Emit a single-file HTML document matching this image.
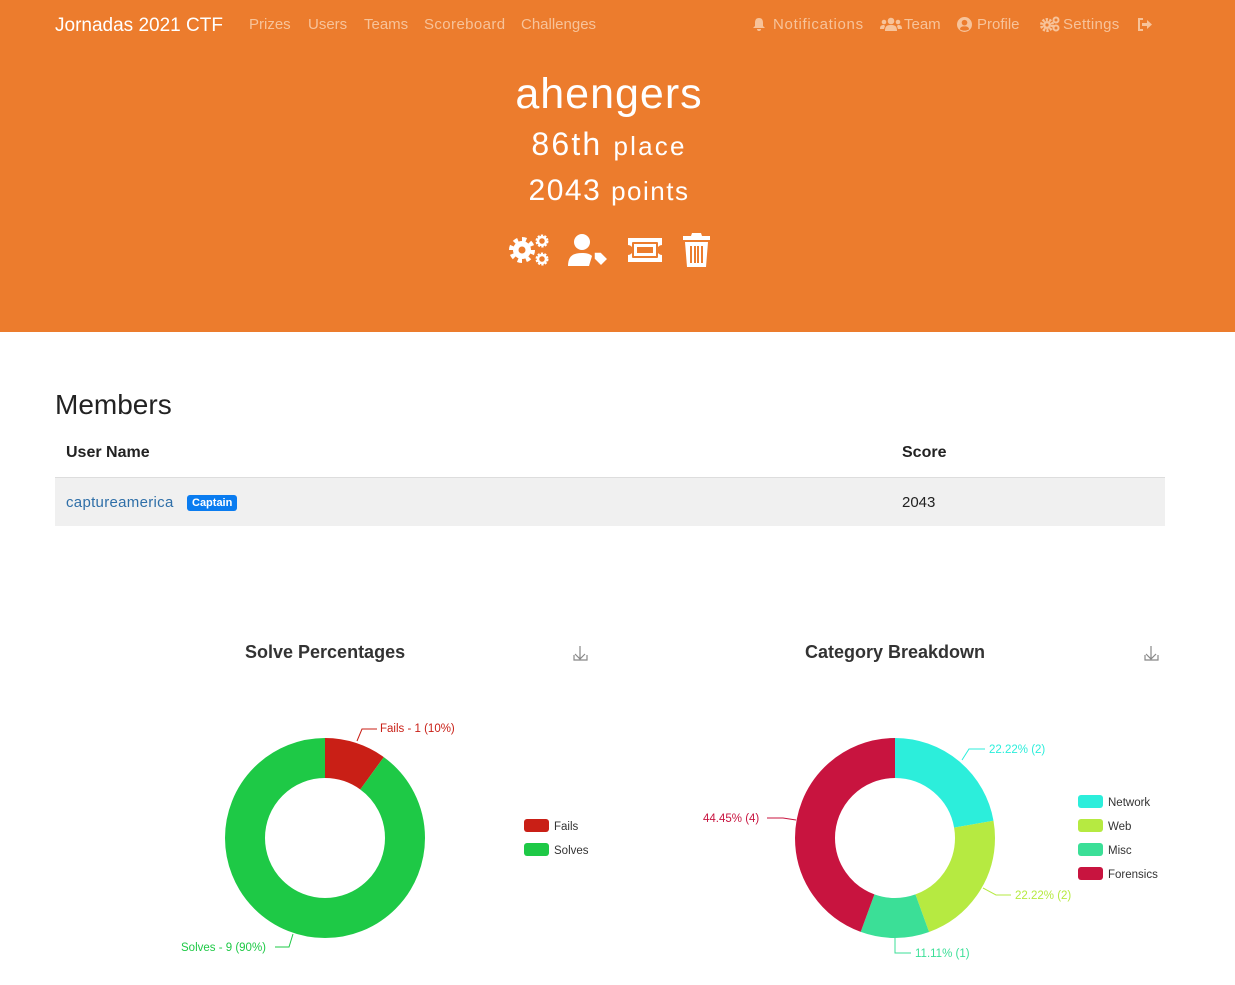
<!DOCTYPE html>
<html><head><meta charset="utf-8"><style>
*{margin:0;padding:0;box-sizing:border-box}
body{width:1235px;height:985px;background:#fff;font-family:"Liberation Sans",sans-serif;position:relative;overflow:hidden}
.hdr{position:absolute;left:0;top:0;width:1235px;height:332px;background:#ec7c2d}
.a{position:absolute;white-space:nowrap}
.nav{color:#f7c39a;font-size:15px;top:16px}
.ctr{left:0;width:1218px;text-align:center;color:#fff}
</style></head><body>
<div class="hdr">
<div class="a" style="left:55px;top:15px;color:#fff;font-size:19px">Jornadas 2021 CTF</div>
<div class="a nav" style="left:249px">Prizes</div>
<div class="a nav" style="left:308px">Users</div>
<div class="a nav" style="left:364px">Teams</div>
<div class="a nav" style="left:424px;letter-spacing:0.4px">Scoreboard</div>
<div class="a nav" style="left:521px">Challenges</div>
<svg class="a" style="left:752px;top:17px" width="14" height="15" viewBox="0 0 14 15"><path d="M7 1c-3 0-4 2-4 5v3l-2 2h12l-2-2V6c0-3-1-5-4-5zM5 12a2 2 0 0 0 4 0z" fill="#f7c39a"/></svg>
<div class="a nav" style="left:773px;letter-spacing:0.7px">Notifications</div>
<svg class="a" style="left:880px;top:17px" width="22" height="14" viewBox="0 0 22 14"><circle cx="11" cy="4" r="3.3" fill="#f7c39a"/><circle cx="4" cy="5" r="2.3" fill="#f7c39a"/><circle cx="18" cy="5" r="2.3" fill="#f7c39a"/><path d="M5 14c0-5 2-6 6-6s6 1 6 6zM0 12c0-3 1-4 4-4l1 1-1 3zM22 12c0-3-1-4-4-4l-1 1 1 3z" fill="#f7c39a"/></svg>
<div class="a nav" style="left:904px">Team</div>
<svg class="a" style="left:957px;top:17px" width="15" height="15" viewBox="0 0 16 16"><circle cx="8" cy="8" r="8" fill="#f7c39a"/><circle cx="8" cy="6" r="3" fill="#ec7c2d"/><path d="M3 13c1-3 3-3 5-3s4 0 5 3c-3 2-7 2-10 0z" fill="#ec7c2d"/></svg>
<div class="a nav" style="left:977px">Profile</div>
<svg class="a" style="left:1040px;top:16px" width="20" height="16" viewBox="0 0 20 16"><circle cx="7" cy="9" r="5.5" fill="none" stroke="#f7c39a" stroke-width="3" stroke-dasharray="2.2 1.3"/><circle cx="7" cy="9" r="4" fill="#f7c39a"/><circle cx="7" cy="9" r="1.6" fill="#ec7c2d"/><circle cx="16" cy="4" r="2.5" fill="none" stroke="#f7c39a" stroke-width="2"/><circle cx="16" cy="12" r="2.5" fill="none" stroke="#f7c39a" stroke-width="2"/></svg>
<div class="a nav" style="left:1063px;letter-spacing:0.3px">Settings</div>
<svg class="a" style="left:1137px;top:18px" width="16" height="13" viewBox="0 0 16 13"><path d="M6 1H2v11h4" fill="none" stroke="#f7c39a" stroke-width="2"/><path d="M5 5h5V2l5 4.5-5 4.5V8H5z" fill="#f7c39a"/></svg>
<div class="a ctr" style="top:70px;font-size:43px;letter-spacing:1px">ahengers</div>
<div class="a ctr" style="top:126px;font-size:32px;letter-spacing:2.2px">86th <span style="font-size:26px">place</span></div>
<div class="a ctr" style="top:174px;font-size:30px;letter-spacing:1.5px">2043 <span style="font-size:26px">points</span></div>
<svg class="a" style="left:508px;top:233px" width="42" height="34" viewBox="0 0 42 34"><circle cx="14" cy="17" r="10" fill="none" stroke="#fff" stroke-width="6" stroke-dasharray="4 3.8"/><circle cx="14" cy="17" r="9" fill="#fff"/><circle cx="14" cy="17" r="3.5" fill="#ec7c2d"/><circle cx="34" cy="8" r="5" fill="none" stroke="#fff" stroke-width="3" stroke-dasharray="2 1.2"/><circle cx="34" cy="8" r="4" fill="none" stroke="#fff" stroke-width="2.5"/><circle cx="34" cy="26" r="5" fill="none" stroke="#fff" stroke-width="3" stroke-dasharray="2 1.2"/><circle cx="34" cy="26" r="4" fill="none" stroke="#fff" stroke-width="2.5"/></svg>
<svg class="a" style="left:567px;top:233px" width="42" height="34" viewBox="0 0 42 34"><circle cx="15" cy="9" r="8" fill="#fff"/><path d="M1 33c0-10 5-13 14-13 5 0 8 1 10 3l-3 10z" fill="#fff"/><path d="M27 19h7l7 7-7 7-7-7z" fill="#fff" stroke="#ec7c2d" stroke-width="1.5"/></svg>
<svg class="a" style="left:626px;top:237px" width="38" height="26" viewBox="0 0 38 26"><path d="M2 1h34v7a5 5 0 0 0 0 10v7H2v-7a5 5 0 0 0 0-10z" fill="#fff"/><rect x="6" y="5" width="26" height="16" rx="1" fill="#ec7c2d"/><rect x="8" y="7" width="22" height="12" fill="#fff"/><rect x="11" y="10" width="16" height="6" fill="#ec7c2d"/></svg>
<svg class="a" style="left:683px;top:233px" width="27" height="34" viewBox="0 0 27 34"><path d="M9 0h9l1 3h8v4H0V3h8z" fill="#fff"/><path d="M2 9h23l-2 25H4z" fill="#fff"/><path d="M8 13v17M12 13v17M15 13v17M19 13v17" stroke="#ec7c2d" stroke-width="2"/></svg>
</div>
<div class="a" style="left:55px;top:389px;font-size:28px;color:#222">Members</div>
<div class="a" style="left:66px;top:444px;font-size:16px;font-weight:bold;color:#222">User Name</div>
<div class="a" style="left:902px;top:444px;font-size:16px;font-weight:bold;color:#222">Score</div>
<div class="a" style="left:55px;top:477px;width:1110px;height:49px;background:#f0f0f0;border-top:1px solid #ddd"></div>
<div class="a" style="left:66px;top:494px;font-size:15px;color:#2f6fa8;letter-spacing:0.3px">captureamerica</div>
<div class="a" style="left:187px;top:495px;background:#0a7cf0;color:#fff;font-size:11px;font-weight:bold;padding:2px 5px;border-radius:3px">Captain</div>
<div class="a" style="left:902px;top:494px;font-size:15px;color:#222">2043</div>

<div class="a" style="left:245px;top:642px;font-size:18px;font-weight:bold;color:#333">Solve Percentages</div>
<div class="a" style="left:805px;top:642px;font-size:18px;font-weight:bold;color:#333">Category Breakdown</div>
<svg class="a" style="left:0;top:600px" width="1235" height="385" viewBox="0 600 1235 385" font-family="Liberation Sans, sans-serif" font-size="11.5">
<g fill="none" stroke="#888" stroke-width="1.2"><path d="M580 646v13M575 654l5 5 5-5M574 655v5h13v-5"/><path d="M1151 646v13M1146 654l5 5 5-5M1145 655v5h13v-5"/></g>
<g fill="none" stroke-width="40" transform="rotate(-90 325 838)">
<circle cx="325" cy="838" r="80" stroke="#c91f16" stroke-dasharray="50.27 452.4"/>
<circle cx="325" cy="838" r="80" stroke="#1ec946" stroke-dasharray="452.4 50.27" stroke-dashoffset="-50.27"/></g>
<g fill="none" stroke-width="40" transform="rotate(-90 895 838)">
<circle cx="895" cy="838" r="80" stroke="#2ceedb" stroke-dasharray="111.7 391"/>
<circle cx="895" cy="838" r="80" stroke="#b6ea41" stroke-dasharray="111.7 391" stroke-dashoffset="-111.7"/>
<circle cx="895" cy="838" r="80" stroke="#3bdf97" stroke-dasharray="55.85 447" stroke-dashoffset="-223.4"/>
<circle cx="895" cy="838" r="80" stroke="#c8143f" stroke-dasharray="223.4 279.3" stroke-dashoffset="-279.25"/></g>
<polyline points="357,741 362,729 377,729" fill="none" stroke="#c91f16"/>
<text x="380" y="732" fill="#c91f16">Fails - 1 (10%)</text>
<polyline points="293,934 289,947 275,947" fill="none" stroke="#1ec946"/>
<text x="181" y="951" fill="#1ec946">Solves - 9 (90%)</text>
<polyline points="962,760 969,749 985,749" fill="none" stroke="#2ceedb"/>
<text x="989" y="753" fill="#2ceedb">22.22% (2)</text>
<polyline points="983,888 996,895 1011,895" fill="none" stroke="#b6ea41"/>
<text x="1015" y="899" fill="#b6ea41">22.22% (2)</text>
<polyline points="895,937 895,953 911,953" fill="none" stroke="#3bdf97"/>
<text x="915" y="957" fill="#3bdf97">11.11% (1)</text>
<polyline points="796,820 783,818 767,818" fill="none" stroke="#c8143f"/>
<text x="703" y="822" fill="#c8143f">44.45% (4)</text>
<g fill="#333">
<rect x="524" y="819" width="25" height="13" rx="3" fill="#c91f16"/><text x="554" y="830">Fails</text>
<rect x="524" y="843" width="25" height="13" rx="3" fill="#1ec946"/><text x="554" y="854">Solves</text>
<rect x="1078" y="795" width="25" height="13" rx="3" fill="#2ceedb"/><text x="1108" y="806">Network</text>
<rect x="1078" y="819" width="25" height="13" rx="3" fill="#b6ea41"/><text x="1108" y="830">Web</text>
<rect x="1078" y="843" width="25" height="13" rx="3" fill="#3bdf97"/><text x="1108" y="854">Misc</text>
<rect x="1078" y="867" width="25" height="13" rx="3" fill="#c8143f"/><text x="1108" y="878">Forensics</text>
</g>
</svg>
</body></html>
